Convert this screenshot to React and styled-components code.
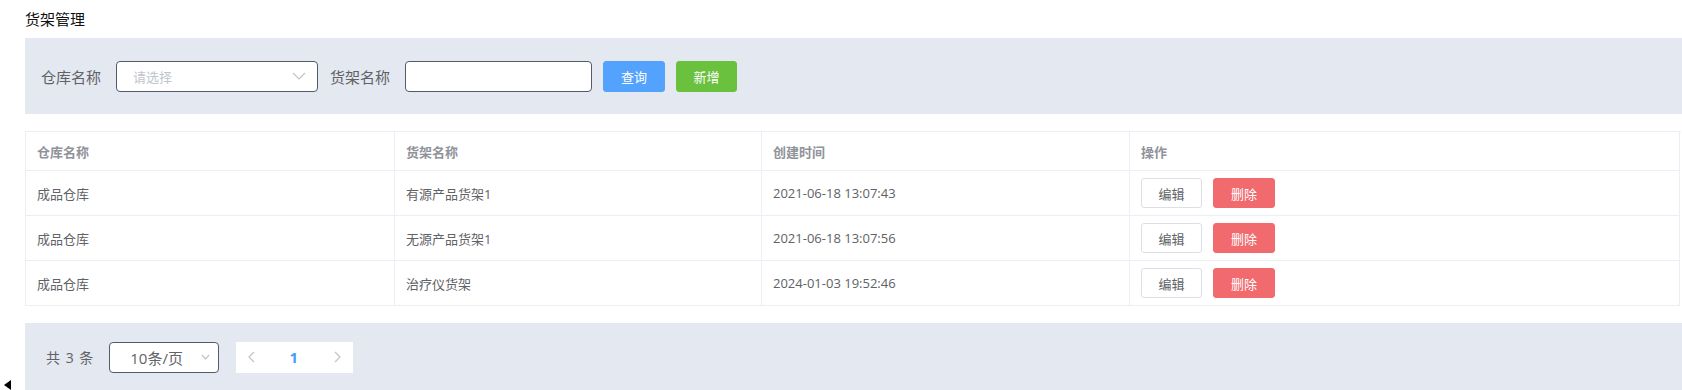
import React from "react";
import styled, { createGlobalStyle } from "styled-components";

const GlobalStyle = createGlobalStyle`
  html, body {
    margin: 0;
    padding: 0;
    background: #fff;
    overflow: hidden;
  }
  body {
    font-family: "Open Sans", "Noto Sans CJK SC", sans-serif;
  }
`;

const Page = styled.div`
  padding-left: 25px;
  width: 1657px;
`;

const Title = styled.h1`
  margin: 0 0 8px;
  padding-top: 8px;
  font-size: 15px;
  line-height: 22px;
  font-weight: 400;
  color: #111;
`;

const Panel = styled.div`
  display: flex;
  align-items: center;
  box-sizing: border-box;
  height: ${(p) => p.height}px;
  padding: 0 ${(p) => p.padX}px;
  background: #e4e8f1;
`;

const Label = styled.span`
  font-size: 15px;
  color: #606266;
  margin-right: 15px;
  white-space: nowrap;
`;

const SelectBox = styled.div`
  box-sizing: border-box;
  display: flex;
  align-items: center;
  justify-content: space-between;
  width: ${(p) => p.width}px;
  height: 31px;
  padding: 0 ${(p) => p.padRight}px 0 ${(p) => p.padLeft}px;
  margin-right: ${(p) => p.gap}px;
  border: 1px solid #545a6b;
  border-radius: 4px;
  background: #fff;
`;

const Placeholder = styled.span`
  font-size: 13px;
  color: #c0c4cc;
`;

const SelectValue = styled.span`
  font-size: 15px;
  color: #606266;
`;

const TextInput = styled.input`
  box-sizing: border-box;
  width: 187px;
  height: 31px;
  margin-right: 11px;
  border: 1px solid #545a6b;
  border-radius: 4px;
  background: #fff;
  outline: none;
`;

const Button = styled.button`
  box-sizing: border-box;
  width: ${(p) => p.width}px;
  height: ${(p) => p.height}px;
  margin-right: 11px;
  padding: 0;
  font-family: inherit;
  font-size: 13px;
  color: ${(p) => (p.bg ? "#fff" : "#606266")};
  background: ${(p) => p.bg || "#fff"};
  border: 1px solid ${(p) => p.bg || "#dcdfe6"};
  border-radius: 3px;
  cursor: pointer;
`;

const Table = styled.div`
  width: 1655px;
  margin: 17px 0 17px;
  border-top: 1px solid #ebeef5;
  border-left: 1px solid #ebeef5;
`;

const Row = styled.div`
  display: grid;
  grid-template-columns: 369px 367px 368px 550px;
  height: ${(p) => (p.head ? 39 : 45)}px;
`;

const Cell = styled.div`
  box-sizing: border-box;
  display: flex;
  align-items: center;
  padding: 0 11px;
  border-right: 1px solid #ebeef5;
  border-bottom: 1px solid #ebeef5;
  font-size: 13px;
  color: ${(p) => (p.head ? "#909399" : "#606266")};
  font-weight: ${(p) => (p.head ? 700 : 400)};
`;

const Total = styled.span`
  font-size: 14px;
  color: #606266;
  margin-right: 16px;
  word-spacing: 2px;
`;

const Pager = styled.div`
  display: flex;
  align-items: center;
  height: 31px;
  margin-left: 6px;
  background: #fff;
`;

const PagerBtn = styled.div`
  display: flex;
  align-items: center;
  justify-content: center;
  width: ${(p) => p.width}px;
  height: 100%;
  font-size: 15px;
  font-weight: 700;
  color: #409eff;
`;

const ScrollArrow = styled.div`
  position: fixed;
  left: 4px;
  bottom: 0;
  width: 0;
  height: 0;
  border-top: 5px solid transparent;
  border-bottom: 5px solid transparent;
  border-right: 7px solid #000;
`;

const Chevron = ({ w, h, dir = "down" }) => {
  const paths = {
    down: `M1 1 L${w / 2} ${h - 1} L${w - 1} 1`,
    left: `M${w - 1} 1 L1 ${h / 2} L${w - 1} ${h - 1}`,
    right: `M1 1 L${w - 1} ${h / 2} L1 ${h - 1}`,
  };
  return (
    <svg width={w} height={h} viewBox={`0 0 ${w} ${h}`}>
      <path d={paths[dir]} fill="none" stroke="#c0c4cc" strokeWidth="1.2" />
    </svg>
  );
};

const rows = [
  ["成品仓库", "有源产品货架1", "2021-06-18 13:07:43"],
  ["成品仓库", "无源产品货架1", "2021-06-18 13:07:56"],
  ["成品仓库", "治疗仪货架", "2024-01-03 19:52:46"],
];

const App = () => {
  return (
    <Page>
      <GlobalStyle />
      <Title>货架管理</Title>
      <Panel height={76} padX={16}>
        <Label>仓库名称</Label>
        <SelectBox width={202} padLeft={16} padRight={11} gap={12}>
          <Placeholder>请选择</Placeholder>
          <Chevron w={14} h={8} />
        </SelectBox>
        <Label>货架名称</Label>
        <TextInput />
        <Button width={62} height={31} bg="#52a2fe">
          查询
        </Button>
        <Button width={61} height={31} bg="#6ac13d">
          新增
        </Button>
      </Panel>

      <Table>
        <Row head>
          <Cell head>仓库名称</Cell>
          <Cell head>货架名称</Cell>
          <Cell head>创建时间</Cell>
          <Cell head>操作</Cell>
        </Row>
        {rows.map(([store, shelf, time]) => (
          <Row key={time}>
            <Cell>{store}</Cell>
            <Cell>{shelf}</Cell>
            <Cell>{time}</Cell>
            <Cell>
              <Button width={61} height={30}>
                编辑
              </Button>
              <Button width={62} height={30} bg="#f06a6e">
                删除
              </Button>
            </Cell>
          </Row>
        ))}
      </Table>

      <Panel height={68} padX={21}>
        <Total>共 3 条</Total>
        <SelectBox width={110} padLeft={20} padRight={8} gap={11}>
          <SelectValue>10条/页</SelectValue>
          <Chevron w={9} h={6} />
        </SelectBox>
        <Pager>
          <PagerBtn width={30}>
            <Chevron w={7} h={12} dir="left" />
          </PagerBtn>
          <PagerBtn width={55}>1</PagerBtn>
          <PagerBtn width={32}>
            <Chevron w={7} h={12} dir="right" />
          </PagerBtn>
        </Pager>
      </Panel>
      <ScrollArrow />
    </Page>
  );
};

export default App;
